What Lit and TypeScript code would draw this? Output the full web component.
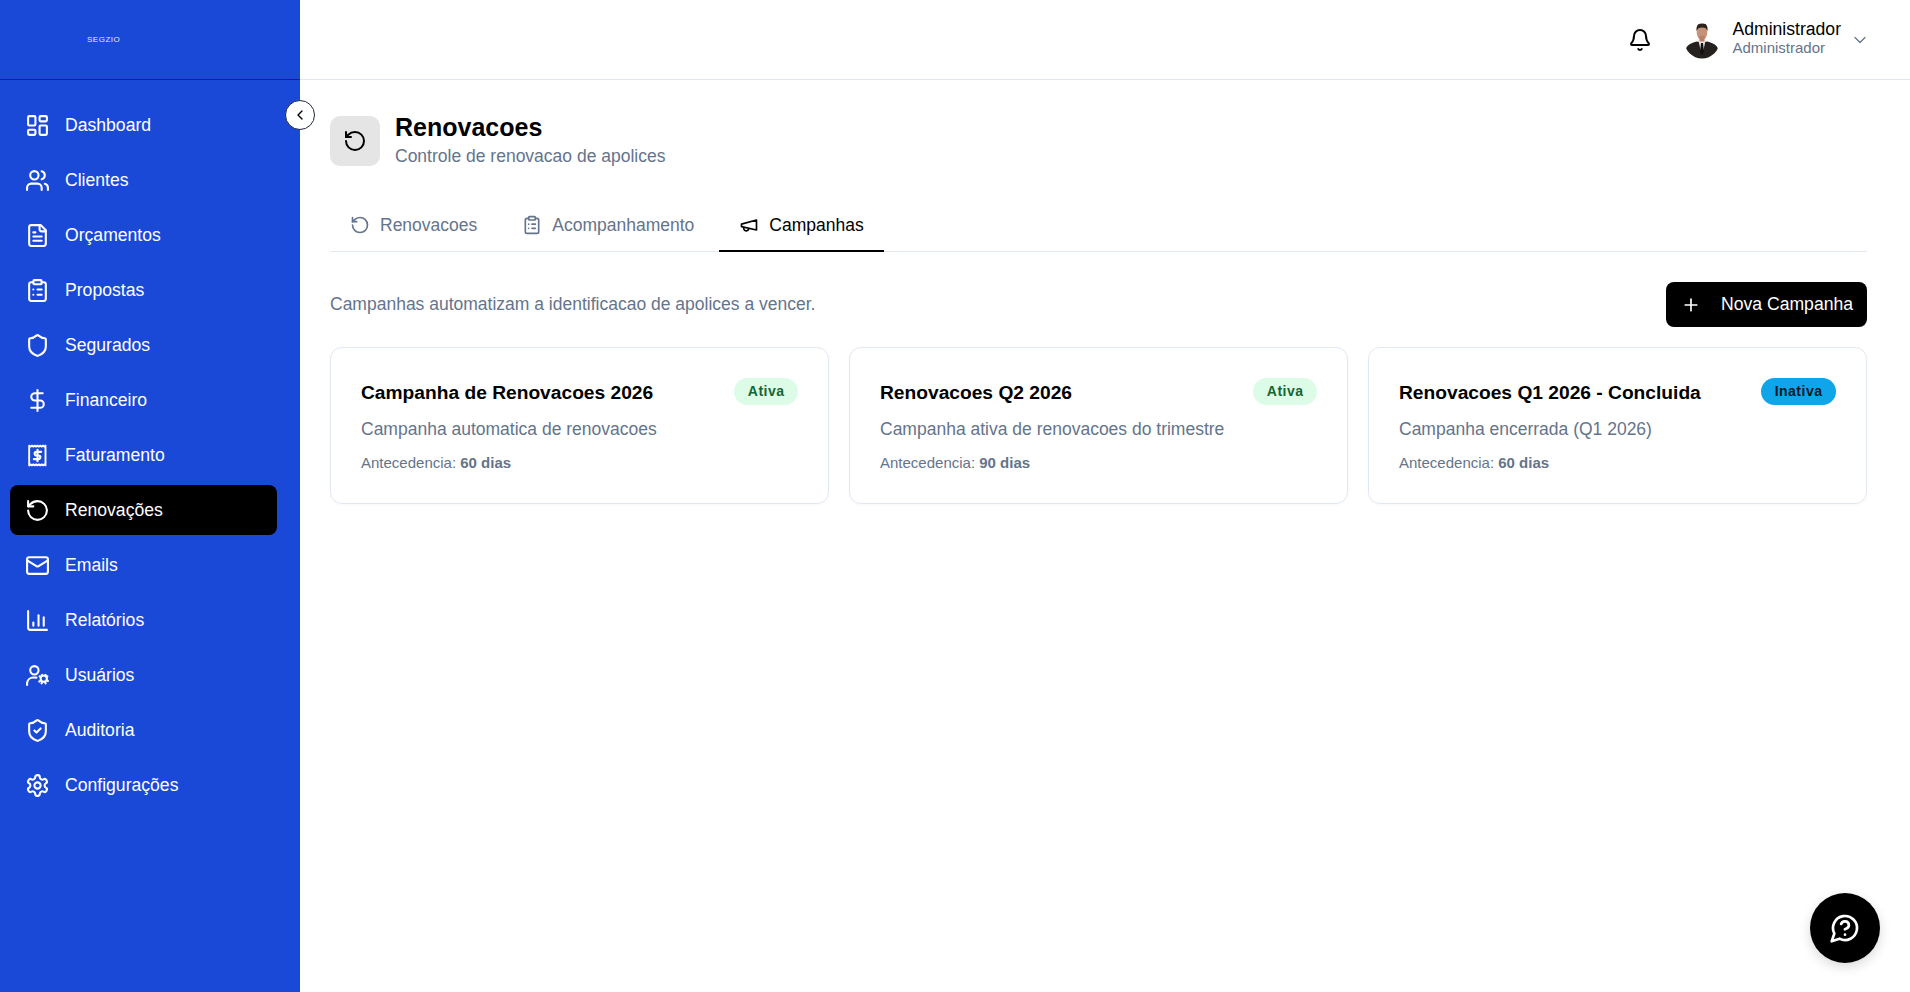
import { LitElement, html, css, svg } from "lit";
import { customElement } from "lit/decorators.js";

const ic = (body: unknown, cls = "") => html`<svg class="ic ${cls}" viewBox="0 0 24 24" fill="none" stroke="currentColor" stroke-width="2" stroke-linecap="round" stroke-linejoin="round">${body}</svg>`;

const rotate = svg`<path d="M3 12a9 9 0 1 0 9-9 9.75 9.75 0 0 0-6.74 2.74L3 8"/><path d="M3 3v5h5"/>`;
const clip = svg`<rect width="8" height="4" x="8" y="2" rx="1" ry="1"/><path d="M16 4h2a2 2 0 0 1 2 2v14a2 2 0 0 1-2 2H6a2 2 0 0 1-2-2V6a2 2 0 0 1 2-2h2"/><path d="M12 11h4"/><path d="M12 16h4"/><path d="M8 11h.01"/><path d="M8 16h.01"/>`;

const nav: [string, unknown][] = [
  ["Dashboard", svg`<rect width="7" height="9" x="3" y="3" rx="1"/><rect width="7" height="5" x="14" y="3" rx="1"/><rect width="7" height="9" x="14" y="12" rx="1"/><rect width="7" height="5" x="3" y="16" rx="1"/>`],
  ["Clientes", svg`<path d="M16 21v-2a4 4 0 0 0-4-4H6a4 4 0 0 0-4 4v2"/><circle cx="9" cy="7" r="4"/><path d="M22 21v-2a4 4 0 0 0-3-3.87"/><path d="M16 3.13a4 4 0 0 1 0 7.75"/>`],
  ["Orçamentos", svg`<path d="M15 2H6a2 2 0 0 0-2 2v16a2 2 0 0 0 2 2h12a2 2 0 0 0 2-2V7Z"/><path d="M14 2v4a2 2 0 0 0 2 2h4"/><path d="M10 9H8"/><path d="M16 13H8"/><path d="M16 17H8"/>`],
  ["Propostas", clip],
  ["Segurados", svg`<path d="M20 13c0 5-3.5 7.5-7.66 8.95a1 1 0 0 1-.67-.01C7.5 20.5 4 18 4 13V6a1 1 0 0 1 1-1c2 0 4.5-1.2 6.24-2.72a1.17 1.17 0 0 1 1.52 0C14.51 3.81 17 5 19 5a1 1 0 0 1 1 1z"/>`],
  ["Financeiro", svg`<line x1="12" x2="12" y1="2" y2="22"/><path d="M17 5H9.5a3.5 3.5 0 0 0 0 7h5a3.5 3.5 0 0 1 0 7H6"/>`],
  ["Faturamento", svg`<path d="M4 2.500l1.330 1 1.330-1 1.340 1 1.330-1 1.330 1 1.340-1 1.330 1 1.330-1 1.340 1 1.330-1 1.330 1 1.020-1V21.500l-1.020-1-1.330 1-1.330-1-1.340 1-1.330-1-1.330 1-1.340-1-1.330 1-1.330-1-1.340 1-1.330-1L4 21.500Z" stroke-width="1.8"/><path d="M15.500 8.500H11a1.750 1.750 0 0 0 0 3.500h2a1.750 1.750 0 0 1 0 3.500H8.500"/><path d="M12 6.500v11"/>`],
  ["Renovações", rotate],
  ["Emails", svg`<rect width="20" height="16" x="2" y="4" rx="2"/><path d="m22 7-8.970 5.700a1.940 1.940 0 0 1-2.060 0L2 7"/>`],
  ["Relatórios", svg`<path d="M3 3v16a2 2 0 0 0 2 2h16"/><path d="M8 17v-3"/><path d="M13 17V7"/><path d="M18 17v-8"/>`],
  ["Usuários", svg`<path d="M2 21v-2a6 6 0 0 1 6-5h3"/><circle cx="9" cy="7" r="4"/><circle cx="18" cy="15" r="3"/><path d="m19.500 12.400.3-1"/><path d="m16.200 18.600-.3 1"/><path d="m14.900 13.200-.9-.5"/><path d="m21.100 16.800.9.5"/><path d="m20.600 13.200.9-.5"/><path d="m14.500 17.300-.9.5"/><path d="m16.200 11.400.3 1"/><path d="m19.500 18.600.3 1"/>`],
  ["Auditoria", svg`<path d="M20 13c0 5-3.500 7.500-7.660 8.950a1 1 0 0 1-.67-.01C7.500 20.500 4 18 4 13V6a1 1 0 0 1 1-1c2 0 4.500-1.200 6.240-2.720a1.170 1.170 0 0 1 1.520 0C14.510 3.810 17 5 19 5a1 1 0 0 1 1 1z"/><path d="m9 12 2 2 4-4"/>`],
  ["Configurações", svg`<path d="M12.220 2h-.44a2 2 0 0 0-2 2v.18a2 2 0 0 1-1 1.730l-.43.25a2 2 0 0 1-2 0l-.15-.08a2 2 0 0 0-2.730.73l-.22.38a2 2 0 0 0 .73 2.730l.15.1a2 2 0 0 1 1 1.720v.51a2 2 0 0 1-1 1.740l-.15.09a2 2 0 0 0-.73 2.730l.22.38a2 2 0 0 0 2.730.73l.15-.08a2 2 0 0 1 2 0l.43.25a2 2 0 0 1 1 1.730V20a2 2 0 0 0 2 2h.44a2 2 0 0 0 2-2v-.18a2 2 0 0 1 1-1.730l.43-.25a2 2 0 0 1 2 0l.15.08a2 2 0 0 0 2.730-.73l.22-.39a2 2 0 0 0-.73-2.730l-.15-.08a2 2 0 0 1-1-1.740v-.5a2 2 0 0 1 1-1.740l.15-.09a2 2 0 0 0 .73-2.730l-.22-.38a2 2 0 0 0-2.730-.73l-.15.08a2 2 0 0 1-2 0l-.43-.25a2 2 0 0 1-1-1.730V4a2 2 0 0 0-2-2z"/><circle cx="12" cy="12" r="3"/>`],
];

const cards = [
  { t: "Campanha de Renovacoes 2026", d: "Campanha automatica de renovacoes", a: "60 dias", s: "Ativa", on: true },
  { t: "Renovacoes Q2 2026", d: "Campanha ativa de renovacoes do trimestre", a: "90 dias", s: "Ativa", on: true },
  { t: "Renovacoes Q1 2026 - Concluida", d: "Campanha encerrada (Q1 2026)", a: "60 dias", s: "Inativa", on: false },
];

@customElement("app-root")
export class AppRoot extends LitElement {
  static styles = css`
    :host { display: flex; min-height: 100vh; position: relative; overflow: hidden; background: #fff;
      font-family: "Liberation Sans", Arial, sans-serif; font-size: 17.6px; color: #000; }
    * { box-sizing: border-box; }
    .ic { display: block; flex: none; width: 24px; height: 24px; }
    .side { width: 300px; flex: none; background: #1a49d7; color: #fff; min-height: 100vh; }
    .logo { height: 80px; border-bottom: 1px solid #1e293b; display: flex; align-items: center; padding-left: 87px; }
    .logo span { font-size: 8px; letter-spacing: 0.5px; color: #e2e9fb; line-height: 1; }
    .nav { display: flex; flex-direction: column; gap: 5px; padding: 20px 23px 0 10px; }
    .item { height: 50px; display: flex; align-items: center; gap: 15px; padding: 0 15px; border-radius: 8px; }
    .item .ic { width: 25px; height: 25px; }
    .item.on { background: #000; }
    .collapse { position: absolute; left: 285px; top: 100px; width: 30px; height: 30px; border-radius: 50%;
      background: #fff; border: 1px solid #1e293b; color: #000; display: flex; align-items: center; justify-content: center; }
    .collapse .ic { width: 16px; height: 16px; }
    .main { flex: 1; min-width: 0; display: flex; flex-direction: column; font-size: 17.5px; }
    .top { height: 80px; border-bottom: 1px solid #e2e8f0; display: flex; align-items: center; justify-content: flex-end; padding-right: 40px; }
    .bell { margin-right: 32px; }
    .avatar { width: 36px; height: 38px; display: block; margin-right: 12px; }
    .who { display: flex; flex-direction: column; margin: 0 9px 4px 0; }
    .who b { font-weight: 400; font-size: 17.6px; line-height: 20px; }
    .who small { font-size: 15px; line-height: 17px; color: #64748b; }
    .chev { width: 20px; height: 20px; color: #64748b; stroke-width: 1.5; }
    .content { padding: 35px 43px 0 30px; }
    .head { display: flex; align-items: center; gap: 15px; }
    .hicon { width: 50px; height: 50px; background: #e5e5e5; border-radius: 10px; display: flex; align-items: center; justify-content: center; }
    .htext { margin-top: -2px; }
    .head h1 { margin: 0; font-size: 25px; line-height: 29px; font-weight: 700; }
    .head p { margin: 4px 0 0; color: #64748b; line-height: 20px; }
    .tabs { display: flex; gap: 5px; margin-top: 39px; border-bottom: 1px solid #e2e8f0; }
    .tab { display: flex; align-items: center; gap: 10px; padding: 0 20px 5px; height: 47px; color: #64748b; border-bottom: 2px solid transparent; margin-bottom: -1px; }
    .tab .ic { width: 20px; height: 20px; }
    .tab.on { color: #000; border-bottom-color: #000; }
    .bar { display: flex; align-items: center; justify-content: space-between; margin-top: 30px; }
    .bar p { margin: 0; color: #64748b; }
    .btn { width: 201px; height: 45px; background: #000; color: #fff; border-radius: 8px; display: flex; align-items: center; gap: 20px; padding: 0 15px; white-space: nowrap; font-size: 17.6px; }
    .btn .ic { width: 20px; height: 20px; }
    .grid { display: grid; grid-template-columns: repeat(3, 1fr); gap: 20px; margin-top: 20px; }
    .card { height: 157px; border: 1px solid #e2e8f0; border-radius: 12px; padding: 30px; box-shadow: 0 1px 3px rgba(0,0,0,.03); }
    .row { display: flex; justify-content: space-between; align-items: flex-start; }
    .card h3 { margin: 3px 0 0; font-size: 19.2px; line-height: 24px; font-weight: 700; }
    .badge { font-size: 14px; font-weight: 700; letter-spacing: .5px; line-height: 27px; height: 27px; padding: 0 13.5px; border-radius: 14px; }
    .badge.on { background: #dcfce7; color: #166534; }
    .badge.off { background: #0ea5e9; color: #0f172a; }
    .desc { margin: 13px 0 0; color: #64748b; line-height: 22px; }
    .meta { margin: 14px 0 0; color: #64748b; font-size: 15px; line-height: 18px; }
    .fab { position: absolute; right: 30px; bottom: 29px; width: 70px; height: 70px; border-radius: 50%; background: #000; color: #fff;
      display: flex; align-items: center; justify-content: center; box-shadow: 0 4px 12px rgba(0,0,0,.15); }
    .fab .ic { width: 32px; height: 32px; }
  `;

  render() {
    return html`
      <aside class="side">
        <div class="logo"><span>SEGZIO</span></div>
        <nav class="nav">
          ${nav.map(([n, i]) => html`<div class="item ${n === "Renovações" ? "on" : ""}">${ic(i)}<span>${n}</span></div>`)}
        </nav>
      </aside>
      <div class="collapse">${ic(svg`<path d="m15 18-6-6 6-6"/>`)}</div>
      <div class="main">
        <header class="top">
          <span class="bell">${ic(svg`<path d="M10.270 21a2 2 0 0 0 3.460 0"/><path d="M3.260 15.330A1 1 0 0 0 4 17h16a1 1 0 0 0 .74-1.670C19.410 13.960 18 12.500 18 8A6 6 0 0 0 6 8c0 4.500-1.410 5.960-2.740 7.330"/>`)}</span>
          <svg class="avatar" viewBox="0 0 36 38">
            <defs><clipPath id="c"><circle cx="18" cy="20" r="17.500"/></clipPath></defs>
            <g clip-path="url(#c)">
              <path d="M2 38V28c1-4 5-6 11-7.500l5 1 5-1c6 1.500 10 3.500 11 7.500v10z" fill="#24211f"/>
              <path d="M14.500 19.500h7l-2 9.500h-3z" fill="#e9e6e2"/>
              <path d="M17 22h2l1 9-2 3-2-3z" fill="#111"/>
              <ellipse cx="18" cy="11" rx="5.300" ry="8" fill="#c69378"/>
              <rect x="15.500" y="15" width="5" height="5.500" fill="#b78067"/>
              <path d="M12.500 10c-.5-6 2.300-8 5.700-8s6 2.400 5.300 8c-1-2.500-2-3.500-5.300-3.500s-4.700 1-5.700 3.500z" fill="#2c211b"/>
            </g>
          </svg>
          <div class="who"><b>Administrador</b><small>Administrador</small></div>
          ${ic(svg`<path d="m6 9 6 6 6-6"/>`, "chev")}
        </header>
        <main class="content">
          <div class="head">
            <div class="hicon">${ic(rotate)}</div>
            <div class="htext"><h1>Renovacoes</h1><p>Controle de renovacao de apolices</p></div>
          </div>
          <div class="tabs">
            <div class="tab">${ic(rotate)}<span>Renovacoes</span></div>
            <div class="tab">${ic(clip)}<span>Acompanhamento</span></div>
            <div class="tab on">${ic(svg`<path d="m3 11 18-5v12L3 14v-3z"/><path d="M11.600 16.800a3 3 0 1 1-5.800-1.600"/>`)}<span>Campanhas</span></div>
          </div>
          <div class="bar">
            <p>Campanhas automatizam a identificacao de apolices a vencer.</p>
            <div class="btn">${ic(svg`<path d="M5 12h14"/><path d="M12 5v14"/>`)}<span>Nova Campanha</span></div>
          </div>
          <div class="grid">
            ${cards.map((c) => html`<div class="card">
              <div class="row"><h3>${c.t}</h3><span class="badge ${c.on ? "on" : "off"}">${c.s}</span></div>
              <p class="desc">${c.d}</p>
              <p class="meta">Antecedencia: <b>${c.a}</b></p>
            </div>`)}
          </div>
        </main>
      </div>
      <div class="fab">${ic(svg`<path d="M7.900 20A9 9 0 1 0 4 16.100L2 22Z"/><path d="M9.090 9a3 3 0 0 1 5.830 1c0 2-3 3-3 3"/><path d="M12 17h.01"/>`)}</div>
    `;
  }
}
